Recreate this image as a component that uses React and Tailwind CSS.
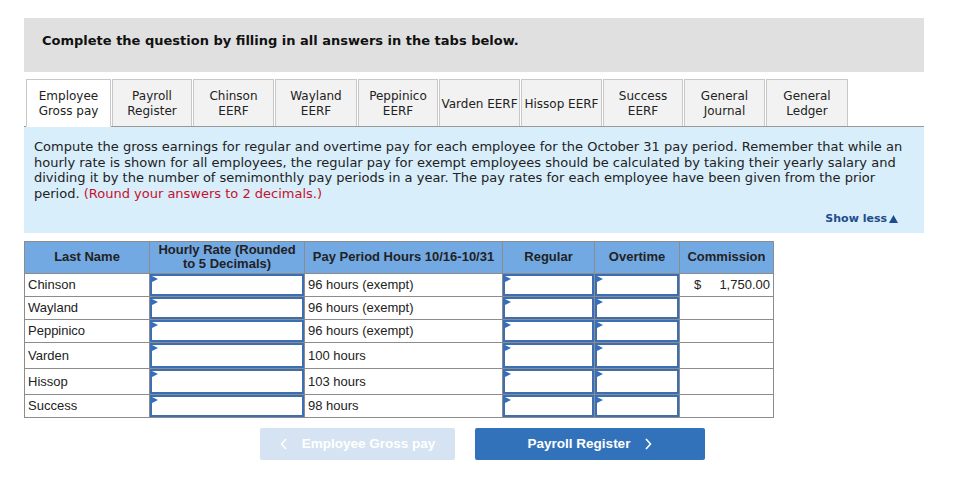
import React from "react";

const verdana = { fontFamily: '"DejaVu Sans", Verdana, sans-serif' };

const tabs = [
  { l1: "Employee", l2: "Gross pay", w: "w-[85px]", active: true },
  { l1: "Payroll", l2: "Register", w: "w-[80px]" },
  { l1: "Chinson", l2: "EERF", w: "w-[81px]" },
  { l1: "Wayland", l2: "EERF", w: "w-[82px]" },
  { l1: "Peppinico", l2: "EERF", w: "w-[80px]" },
  { l1: "Varden EERF", w: "w-[81px]" },
  { l1: "Hissop EERF", w: "w-[81px]" },
  { l1: "Success", l2: "EERF", w: "w-[80px]" },
  { l1: "General", l2: "Journal", w: "w-[81px]" },
  { l1: "General", l2: "Ledger", w: "w-[82px]" },
];

const rows = [
  { name: "Chinson", hours: "96 hours (exempt)", h: "h-[23px]", ih: "h-[22px]", comm: true },
  { name: "Wayland", hours: "96 hours (exempt)", h: "h-[23px]", ih: "h-[22px]" },
  { name: "Peppinico", hours: "96 hours (exempt)", h: "h-[23px]", ih: "h-[22px]" },
  { name: "Varden", hours: "100 hours", h: "h-[26px]", ih: "h-[25px]" },
  { name: "Hissop", hours: "103 hours", h: "h-[26px]", ih: "h-[25px]" },
  { name: "Success", hours: "98 hours", h: "h-[23px]", ih: "h-[22px]" },
];

function InputCell({ ih }) {
  return (
    <td className="p-0 border border-[#8c8c8c] align-top">
      <div className={`relative ${ih} border-2 border-[#3c6eb4] bg-white`}>
        <svg className="absolute left-0 top-0" width="6" height="6" viewBox="0 0 6 6">
          <polygon points="0,0 6,3 0,6" fill="#2f6fc0" />
        </svg>
      </div>
    </td>
  );
}

export default function App() {
  return (
    <div className="w-[965px] h-[484px] bg-white relative" style={{ fontFamily: '"Liberation Sans", Arial, sans-serif' }}>
      <div className="pl-[24px] pt-[18px] w-[924px]">
        <div className="h-[54px] bg-[#e0e0e0] pl-[18px] pt-[13px]">
          <div className="text-[13px] font-bold text-[#111]" style={verdana}>
            Complete the question by filling in all answers in the tabs below.
          </div>
        </div>

        <div className="mt-[7px] flex gap-[1px] pl-[2px] border-b border-[#999] h-[48px] items-end">
          {tabs.map((t, i) => (
            <div
              key={i}
              className={`${t.w} shrink-0 flex flex-col items-center justify-center pt-[2px] text-[12px] leading-[15px] text-[#222] border border-[#c8c8c8] ${
                t.active ? "bg-white border-b-white -mb-px h-[48px]" : "bg-[#f2f2f2] border-b-0 h-[47px]"
              }`}
              style={verdana}
            >
              <span className="whitespace-nowrap">{t.l1}</span>
              {t.l2 && <span className="whitespace-nowrap">{t.l2}</span>}
            </div>
          ))}
        </div>

        <div className="bg-[#d8eefa] h-[106px] pl-[10px] pr-[18px] pt-[12px] text-[13px] leading-[15.6px] text-[#222] relative" style={verdana}>
          <p>
            Compute the gross earnings for regular and overtime pay for each employee for the October 31 pay period. Remember that while an hourly rate is shown for all employees, the regular pay for exempt employees should be calculated by taking their yearly salary and dividing it by the number of semimonthly pay periods in a year. The pay rates for each employee have been given from the prior period.{" "}
            <span className="text-[#c8102e]">(Round your answers to 2 decimals.)</span>
          </p>
          <div className="absolute right-[26px] top-[84px] text-[11px] font-bold text-[#1f4c8c] flex items-center gap-[2px]">
            Show less
            <svg width="9" height="8" viewBox="0 0 9 8"><polygon points="4.5,0 9,8 0,8" fill="#1f4c8c" /></svg>
          </div>
        </div>

        <table className="mt-[8px] border-collapse text-[13px] text-[#222] table-fixed">
          <colgroup>
            <col className="w-[125px]" />
            <col className="w-[155px]" />
            <col className="w-[198px]" />
            <col className="w-[92px]" />
            <col className="w-[85px]" />
            <col className="w-[94px]" />
          </colgroup>
          <thead>
            <tr className="h-[32px] bg-[#73a9e3] font-bold text-[13px] leading-[14px]">
              <th className="border border-[#8c8c8c] font-bold pb-[1px]">Last Name</th>
              <th className="border border-[#8c8c8c] font-bold whitespace-nowrap pb-[1px]">Hourly Rate (Rounded<br />to 5 Decimals)</th>
              <th className="border border-[#8c8c8c] font-bold whitespace-nowrap pb-[1px]">Pay Period Hours 10/16-10/31</th>
              <th className="border border-[#8c8c8c] font-bold pb-[1px]">Regular</th>
              <th className="border border-[#8c8c8c] font-bold pb-[1px]">Overtime</th>
              <th className="border border-[#8c8c8c] font-bold pb-[1px]">Commission</th>
            </tr>
          </thead>
          <tbody>
            {rows.map((r) => (
              <tr key={r.name} className={r.h}>
                <td className="border border-[#8c8c8c] px-[3px] py-0">{r.name}</td>
                <InputCell ih={r.ih} />
                <td className="border border-[#8c8c8c] px-[3px] py-0 whitespace-nowrap">{r.hours}</td>
                <InputCell ih={r.ih} />
                <InputCell ih={r.ih} />
                <td className="border border-[#8c8c8c] px-[3px] py-0">
                  {r.comm && (
                    <div className="flex justify-between pl-[11px]">
                      <span>$</span>
                      <span>1,750.00</span>
                    </div>
                  )}
                </td>
              </tr>
            ))}
          </tbody>
        </table>
      </div>

      <div className="mt-[10px] flex justify-center gap-[20px]">
        <div className="w-[195px] h-[32px] rounded-[2px] bg-[#d6e3f2] text-white font-bold text-[13.5px] flex items-center justify-center gap-[14px]">
          <svg width="8" height="12" viewBox="0 0 8 12"><polyline points="6,1 1.5,6 6,11" fill="none" stroke="white" strokeWidth="1.6" /></svg>
          <span>Employee Gross pay</span>
        </div>
        <div className="w-[230px] h-[32px] rounded-[2px] bg-[#3172bb] text-white font-bold text-[13.5px] flex items-center justify-center gap-[14px]">
          <span>Payroll Register</span>
          <svg width="8" height="12" viewBox="0 0 8 12"><polyline points="2,1 6.5,6 2,11" fill="none" stroke="white" strokeWidth="1.6" /></svg>
        </div>
      </div>
    </div>
  );
}
